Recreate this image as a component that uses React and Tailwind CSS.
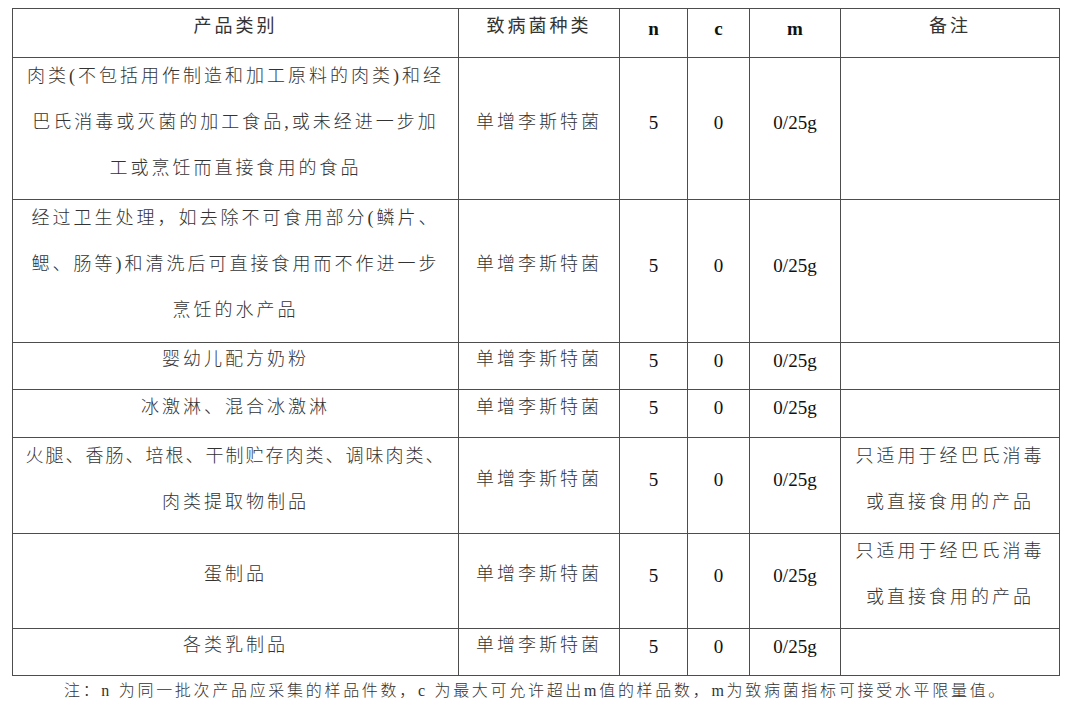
import React from "react";

const font = {
  fontFamily: '"Liberation Serif", "Noto Sans CJK SC", serif',
};

const rows = [
  {
    h: "h-[142px]",
    name: [
      "肉类(不包括用作制造和加工原料的肉类)和经",
      "巴氏消毒或灭菌的加工食品,或未经进一步加",
      "工或烹饪而直接食用的食品",
    ],
    note: null,
  },
  {
    h: "h-[143px]",
    name: [
      "经过卫生处理，如去除不可食用部分(鳞片、",
      "鳃、肠等)和清洗后可直接食用而不作进一步",
      "烹饪的水产品",
    ],
    note: null,
  },
  { h: "h-[47px]", name: ["婴幼儿配方奶粉"], note: null },
  { h: "h-[48px]", name: ["冰激淋、混合冰激淋"], note: null },
  {
    h: "h-[96px]",
    name: ["火腿、香肠、培根、干制贮存肉类、调味肉类、", "肉类提取物制品"],
    note: ["只适用于经巴氏消毒", "或直接食用的产品"],
    tight: true,
  },
  {
    h: "h-[95px]",
    name: ["蛋制品"],
    note: ["只适用于经巴氏消毒", "或直接食用的产品"],
  },
  { h: "h-[47px]", name: ["各类乳制品"], note: null },
];

function Lines({ lines, tight }) {
  return (
    <div className="-translate-y-[7px] leading-[46px]">
      {lines.map((l, i) => (
        <div
          key={i}
          className={
            "whitespace-nowrap " +
            (tight && i === 0 ? "tracking-[2px]" : "tracking-[3px]")
          }
        >
          {l}
        </div>
      ))}
    </div>
  );
}

const cell = "border border-[#4d4d4d] p-0 text-center align-middle";
const num = cell + " text-[19px] font-normal text-[#111]";

export default function App() {
  return (
    <div className="bg-white w-[1080px] h-[719px] pl-[12px] pt-[8px] text-[#333]" style={font}>
      <table className="border-collapse table-fixed w-[1047px] text-[18px] font-light">
        <colgroup>
          <col className="w-[446px]" />
          <col className="w-[161px]" />
          <col className="w-[68px]" />
          <col className="w-[62px]" />
          <col className="w-[91px]" />
          <col className="w-[219px]" />
        </colgroup>
        <thead>
          <tr className="h-[49px]">
            <th className={cell + " font-normal"}>
              <Lines lines={["产品类别"]} />
            </th>
            <th className={cell + " font-normal"}>
              <Lines lines={["致病菌种类"]} />
            </th>
            <th className={cell + " font-bold text-[19px] text-[#111]"}>
              <div className="-translate-y-[4px]">n</div>
            </th>
            <th className={cell + " font-bold text-[19px] text-[#111]"}>
              <div className="-translate-y-[4px]">c</div>
            </th>
            <th className={cell + " font-bold text-[19px] text-[#111]"}>
              <div className="-translate-y-[4px]">m</div>
            </th>
            <th className={cell + " font-normal"}>
              <Lines lines={["备注"]} />
            </th>
          </tr>
        </thead>
        <tbody>
          {rows.map((r, i) => (
            <tr key={i} className={r.h}>
              <td className={cell}>
                <Lines lines={r.name} tight={r.tight} />
              </td>
              <td className={cell}>
                <Lines lines={["单增李斯特菌"]} />
              </td>
              <td className={num}>
                <div className="-translate-y-[5px]">5</div>
              </td>
              <td className={num}>
                <div className="-translate-y-[5px]">0</div>
              </td>
              <td className={num}>
                <div className="-translate-y-[5px]">0/25g</div>
              </td>
              <td className={cell}>{r.note && <Lines lines={r.note} />}</td>
            </tr>
          ))}
        </tbody>
      </table>
      <div className="w-[1047px] text-center text-[16px] font-light tracking-[2.7px] leading-[30px]">
        注：n 为同一批次产品应采集的样品件数，c 为最大可允许超出m值的样品数，m为致病菌指标可接受水平限量值。
      </div>
    </div>
  );
}
